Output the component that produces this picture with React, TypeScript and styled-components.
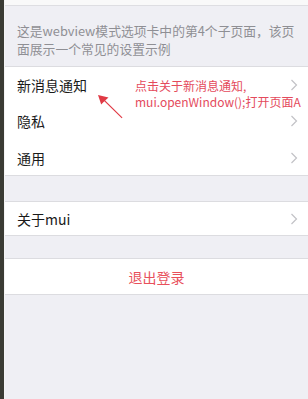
import React from "react";
import styled, { createGlobalStyle } from "styled-components";

const GlobalStyle = createGlobalStyle`
  html, body { margin: 0; padding: 0; }
  body {
    font-family: "Noto Sans CJK SC", "Noto Sans", sans-serif;
    background: #efeff4;
  }
`;

const Frame = styled.div`
  display: flex;
  width: 308px;
  height: 399px;
  overflow: hidden;
`;

const SideStrip = styled.div`
  width: 4px;
  background: #3a3b34;
  border-right: 1px solid #f4f4f4;
  flex-shrink: 0;
`;

const Page = styled.div`
  position: relative;
  flex: 1;
  background: #efeff4;
  display: flex;
  flex-direction: column;
`;

const TopBar = styled.div`
  height: 5px;
  flex-shrink: 0;
  background: #f9f9f9;
  border-bottom: 1px solid #dedee2;
`;

const Desc = styled.p`
  margin: 0;
  padding: 16px 4px 8px 12px;
  color: #8f8f94;
  font-size: 12.8px;
  line-height: 18px;
`;

const Group = styled.div<{ $gap: number }>`
  margin-top: ${(p) => p.$gap}px;
  background: #fff;
  border-top: 1px solid #dcdce0;
  border-bottom: 1px solid #dcdce0;
`;

const Row = styled.div<{ $h?: number }>`
  position: relative;
  height: ${(p) => p.$h ?? 35}px;
  display: flex;
  align-items: center;
  padding: 0 10px 0 12px;
  font-size: 14px;
  color: #1a1a1a;
  & + & {
    margin-top: 1px;
  }
  & + &::before {
    content: "";
    position: absolute;
    left: 10px;
    right: 0;
    top: -1px;
    height: 1px;
    background: #e2e2e6;
  }
`;

const Label = styled.span`
  flex: 1;
`;

const Logout = styled.div`
  height: 35px;
  display: flex;
  align-items: center;
  justify-content: center;
  color: #e8505b;
  font-size: 14px;
`;

const Annotation = styled.div`
  position: absolute;
  left: 130px;
  top: 78px;
  color: #e44a5c;
  font-size: 12px;
  line-height: 16px;
  white-space: nowrap;
`;

const ArrowSvg = styled.svg`
  position: absolute;
  left: 89px;
  top: 93px;
`;

const Chevron = () => (
  <svg width="8" height="12" viewBox="0 0 8 12">
    <path d="M1.5 1 L6.5 6 L1.5 11" fill="none" stroke="#c2c2c6" strokeWidth="1.2" />
  </svg>
);

export default function App() {
  return (
    <>
      <GlobalStyle />
      <Frame>
        <SideStrip />
        <Page>
          <TopBar />
          <Desc>这是webview模式选项卡中的第4个子页面，该页面展示一个常见的设置示例</Desc>
          <Group $gap={0}>
            <Row>
              <Label>新消息通知</Label>
              <Chevron />
            </Row>
            <Row $h={36}>
              <Label>隐私</Label>
              <Chevron />
            </Row>
            <Row>
              <Label>通用</Label>
              <Chevron />
            </Row>
          </Group>
          <Group $gap={25}>
            <Row $h={33}>
              <Label>关于mui</Label>
              <Chevron />
            </Row>
          </Group>
          <Group $gap={22}>
            <Logout>退出登录</Logout>
          </Group>
          <Annotation>
            点击关于新消息通知,
            <br />
            mui.openWindow();打开页面A
          </Annotation>
          <ArrowSvg width="40" height="36" viewBox="0 0 40 36">
            <path d="M4 2 L14.5 4.5 L11.2 7.4 L28.5 24.6 L27.7 25.3 L10.3 8.3 L7.2 11.6 Z" fill="#e03a45" />
          </ArrowSvg>
        </Page>
      </Frame>
    </>
  );
}
